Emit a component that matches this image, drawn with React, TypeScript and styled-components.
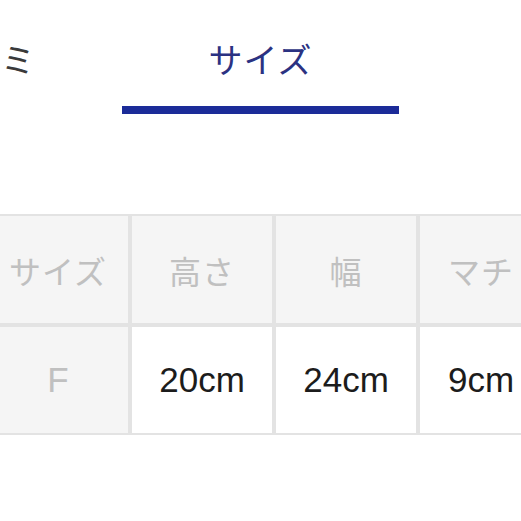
import React from "react";
import styled, { createGlobalStyle } from "styled-components";

const Global = createGlobalStyle`
  html, body { margin: 0; padding: 0; background: #ffffff; }
  body { overflow: hidden; font-family: "Liberation Sans", "Noto Sans CJK JP", sans-serif; }
`;

const Page = styled.div`
  width: 521px;
  height: 521px;
  overflow: hidden;
  background: #ffffff;
  display: flex;
  flex-direction: column;
`;

const TabBar = styled.div`
  display: flex;
  margin-left: -155px;
  height: 116px;
`;

const Tab = styled.div<{ $align: "start" | "center" | "end"; $pad?: number }>`
  flex: 0 0 277px;
  display: flex;
  flex-direction: column;
  align-items: ${(p) => (p.$align === "start" ? "flex-start" : p.$align === "end" ? "flex-end" : "center")};
  padding-top: 41px;
  padding-left: ${(p) => (p.$align === "start" ? p.$pad ?? 0 : 0)}px;
  padding-right: ${(p) => (p.$align === "end" ? p.$pad ?? 0 : 0)}px;
  box-sizing: border-box;
`;

const TabLabel = styled.span<{ $active?: boolean }>`
  font-family: "Noto Sans CJK JP", sans-serif;
  font-size: 34px;
  line-height: 36px;
  white-space: nowrap;
  color: ${(p) => (p.$active ? "#2b3282" : "#3a3a3a")};
  letter-spacing: 1px;
`;

const Underline = styled.div`
  align-self: stretch;
  height: 8px;
  margin-top: 29px;
  background: #1b2b98;
`;

const Table = styled.div`
  margin-top: 98px;
  margin-left: -14px;
  display: grid;
  grid-template-columns: 144px 144px 144px 126px;
  grid-template-rows: 111px 110px;
`;

const Cell = styled.div<{ $head?: boolean; $muted?: boolean }>`
  box-sizing: border-box;
  border: 2px solid #e3e3e3;
  background: ${(p) => (p.$head || p.$muted ? "#f5f5f5" : "#ffffff")};
  display: flex;
  align-items: center;
  justify-content: center;
  color: ${(p) => (p.$head || p.$muted ? "#c0c0c0" : "#1c1c1c")};
  font-family: ${(p) => (p.$head ? `"Noto Sans CJK JP", sans-serif` : `"Liberation Sans", "Noto Sans CJK JP", sans-serif`)};
  font-size: ${(p) => (p.$head ? "32px" : "35px")};
  letter-spacing: ${(p) => (p.$head ? "1px" : "0")};
  white-space: nowrap;
`;

const heads = ["サイズ", "高さ", "幅", "マチ"];
const values = ["F", "20cm", "24cm", "9cm"];

export default function App() {
  return (
    <Page>
      <Global />
      <TabBar>
        <Tab $align="end" $pad={86}>
          <TabLabel>ミ</TabLabel>
        </Tab>
        <Tab $align="center">
          <TabLabel $active>サイズ</TabLabel>
          <Underline />
        </Tab>
        <Tab $align="start" $pad={118}>
          <TabLabel>コメント</TabLabel>
        </Tab>
      </TabBar>
      <Table>
        {heads.map((h) => (
          <Cell key={h} $head>
            {h}
          </Cell>
        ))}
        {values.map((v, i) => (
          <Cell key={v} $muted={i === 0}>
            {v}
          </Cell>
        ))}
      </Table>
    </Page>
  );
}
